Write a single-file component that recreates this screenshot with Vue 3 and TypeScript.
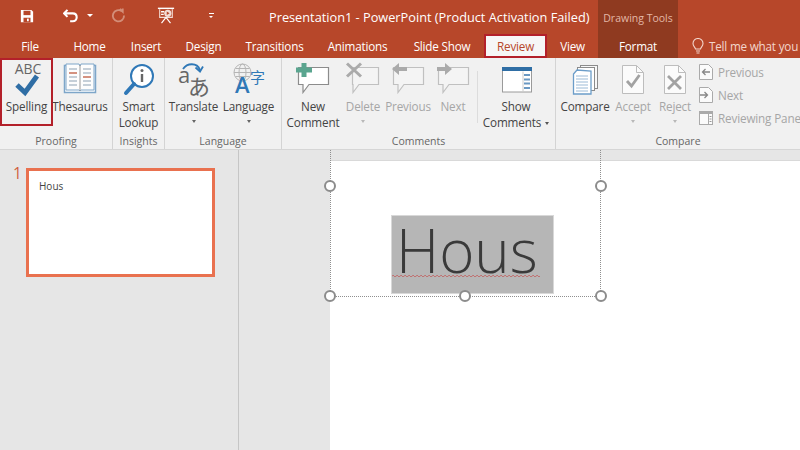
<script setup lang="ts">
interface Tab { label: string; width: number; kind?: string }
const tabs: Tab[] = [
  { label: 'File', width: 60 },
  { label: 'Home', width: 59 },
  { label: 'Insert', width: 54 },
  { label: 'Design', width: 61 },
  { label: 'Transitions', width: 81 },
  { label: 'Animations', width: 85 },
  { label: 'Slide Show', width: 84 },
  { label: 'Review', width: 63, kind: 'active' },
  { label: 'View', width: 51 },
  { label: 'Format', width: 80, kind: 'context' },
]
</script>

<template>
  <div class="app">
    <header class="titlebar">
      <div class="qat">
        <svg class="q-save" width="14" height="14" viewBox="0 0 16 16"><path d="M1 1h12l2 2v12H1z" fill="#fff"/><rect x="4" y="2" width="8" height="5" fill="#b7472a"/><rect x="4" y="10" width="8" height="5" fill="#b7472a"/><rect x="8" y="11" width="2" height="3" fill="#fff"/></svg>
        <svg class="q-undo" width="16" height="14" viewBox="0 0 18 16"><path d="M5 1L1 5l4 4M1 5h10c6 0 6 9 0 9H8" fill="none" stroke="#fff" stroke-width="2.4"/></svg>
        <span class="q-caret"></span>
        <svg class="q-redo" width="15" height="15" viewBox="0 0 15 16"><path d="M11 3.500A6 6 0 1 0 13.400 8M9 1l3 3v-3.500" fill="none" stroke="#d38e79" stroke-width="2"/></svg>
        <svg class="q-show" width="18" height="18" viewBox="0 0 20 20"><path d="M1 1.500h18" stroke="#fff" stroke-width="1.600"/><path d="M3 2.500v9h14v-9" fill="none" stroke="#f3dcd5" stroke-width="1.200"/><path d="M10 11.500L5 18M10 11.500l5 6.500" stroke="#fff" stroke-width="1.300"/><circle cx="12" cy="7" r="4" fill="#f3dcd5"/><path d="M10.800 5l3.200 2-3.200 2z" fill="#b7472a"/><path d="M4.500 4.500h3.500v1.500h-3.500zM4.500 7.500h3v1.500h-3z" fill="#fff"/></svg>
        <span class="q-more"></span>
      </div>
      <div class="doc-title">Presentation1 - PowerPoint (Product Activation Failed)</div>
      <div class="context-label">Drawing Tools</div>
    </header>

    <nav class="tabs">
      <div
        v-for="t in tabs"
        :key="t.label"
        class="tab"
        :class="t.kind"
        :style="{ width: t.width + 'px' }"
      >{{ t.label }}</div>
      <div class="tell">
        <svg width="12" height="16" viewBox="0 0 12 16"><path d="M3.500 11C3 9 1 8 1 5.500a5 5 0 0 1 10 0C11 8 9 9 8.500 11zM4 13h4M4.500 15h3" fill="none" stroke="#f3d6cc" stroke-width="1.100"/></svg>
        <span>Tell me what you want to do</span>
      </div>
    </nav>

    <section class="ribbon">
      <div class="group g-proofing">
        <div class="btns">
          <div class="btn spelling">
            <svg class="ico" width="40" height="38" viewBox="0 0 40 38"><text x="21" y="14" text-anchor="middle" class="abc">ABC</text><path d="M10 25l8 7.500L30 16" fill="none" stroke="#2f6ea5" stroke-width="5"/></svg>
            <span class="lbl">Spelling</span>
          </div>
          <div class="btn thesaurus">
            <svg class="ico" width="34" height="38" viewBox="0 1 34 38"><path d="M1.500 6.500h31v27h-31z" fill="#fff" stroke="#7ea6c9" stroke-width="1.500"/><path d="M3 5h13l1 2 1-2h13v26H18l-1 1-1-1H3z" fill="#fdfdfd" stroke="#7ea6c9"/><path d="M17 6v26" stroke="#9a9a9a"/><path d="M6 10h8M6 14h8M6 18h8M6 22h8M6 26h8M20 10h8M20 14h8M20 18h8M20 22h8M20 26h8" stroke="#b3c0cc" stroke-width="1.400"/><path d="M6 14h8M20 18h8" stroke="#d97f63" stroke-width="1.400"/></svg>
            <span class="lbl">Thesaurus</span>
          </div>
        </div>
        <div class="gname">Proofing</div>
      </div>

      <div class="group g-insights">
        <div class="btns">
          <div class="btn lookup">
            <svg class="ico" width="38" height="38" viewBox="0 -1 38 38"><circle cx="22" cy="15" r="11" fill="#fff" stroke="#2f78b7" stroke-width="2"/><path d="M14 23L6 32" stroke="#2f78b7" stroke-width="4" stroke-linecap="round"/><circle cx="22" cy="9.500" r="1.500" fill="#666"/><path d="M22 13v8" stroke="#666" stroke-width="2.400"/></svg>
            <span class="lbl">Smart<br />Lookup</span>
          </div>
        </div>
        <div class="gname">Insights</div>
      </div>

      <div class="group g-language">
        <div class="btns">
          <div class="btn translate">
            <svg class="ico" width="40" height="38" viewBox="0 -1 40 38"><path d="M9 8c4-6 14-7 17 1" fill="none" stroke="#2f78b7" stroke-width="1.800"/><path d="M21.500 6.500l4.500 4 3-5" fill="none" stroke="#2f78b7" stroke-width="1.800"/><text x="4" y="22" class="tr-a">a</text><text x="14" y="34" class="tr-j">あ</text></svg>
            <span class="lbl">Translate</span>
            <span class="caret"></span>
          </div>
          <div class="btn language">
            <svg class="ico" width="40" height="38" viewBox="0 -1 40 38"><circle cx="13.500" cy="11.500" r="8.500" fill="none" stroke="#b5b5b5"/><ellipse cx="13.500" cy="11.500" rx="3.500" ry="8.500" fill="none" stroke="#b5b5b5"/><path d="M5 11.500h17M6.500 7.500h14M6.500 15.500h14" stroke="#b5b5b5"/><text x="6" y="32" class="la-a">A</text><text x="21" y="22" class="la-j">字</text></svg>
            <span class="lbl">Language</span>
            <span class="caret"></span>
          </div>
        </div>
        <div class="gname">Language</div>
      </div>

      <div class="group g-comments">
        <div class="btns">
          <div class="btn newc">
            <svg class="ico" width="40" height="38" viewBox="0 -1 40 38"><path d="M5.500 6.500h30v17H16l-6 8v-8H5.500z" fill="#fff" stroke="#8c8c8c" stroke-width="1.200"/><path d="M8.500 2h5v4.500H19v5h-5.500V16h-5v-4.500H3v-5h5.500z" fill="#5aa58f"/></svg>
            <span class="lbl">New<br />Comment</span>
          </div>
          <div class="btn dis del">
            <svg class="ico" width="40" height="38" viewBox="0 -1 40 38"><path d="M9.500 6.500h26v17H16l-6 8v-8H9.500z" fill="#f4f4f4" stroke="#c0c0c0" stroke-width="1.200"/><path d="M4 2.500l14 13M18 2.500l-14 13" stroke="#aaa" stroke-width="3"/></svg>
            <span class="lbl">Delete</span>
            <span class="caret pale"></span>
          </div>
          <div class="btn dis prev">
            <svg class="ico" width="40" height="38" viewBox="0 -1 40 38"><path d="M5.500 6.500h30v17H16l-6 8v-8H5.500z" fill="#f4f4f4" stroke="#c0c0c0" stroke-width="1.200"/><path d="M4 8l7-6v4h8v4h-8v4z" fill="#aaa"/></svg>
            <span class="lbl">Previous</span>
          </div>
          <div class="btn dis next">
            <svg class="ico" width="40" height="38" viewBox="0 -1 40 38"><path d="M5.500 6.500h30v17H16l-6 8v-8H5.500z" fill="#f4f4f4" stroke="#c0c0c0" stroke-width="1.200"/><path d="M19 8l-7-6v4H4v4h8v4z" fill="#aaa"/></svg>
            <span class="lbl">Next</span>
          </div>
          <div class="sep"></div>
          <div class="btn showc">
            <svg class="ico" width="34" height="38" viewBox="0 -1 34 38"><rect x="3.500" y="6.500" width="29" height="24.500" fill="#fff" stroke="#9a9a9a"/><rect x="3" y="6" width="30" height="4" fill="#2f6ea5"/><path d="M24 10.500V31" stroke="#ccc"/><path d="M25 14h6M25 18.500h6M25 22.500h6M25 27h6" stroke="#6a98c2" stroke-width="2"/></svg>
            <span class="lbl">Show<br />Comments<i class="inline-caret"></i></span>
          </div>
        </div>
        <div class="gname">Comments</div>
      </div>

      <div class="group g-compare">
        <div class="btns">
          <div class="btn compare">
            <svg class="ico" width="34" height="38" viewBox="0 -1 34 38"><rect x="12.500" y="4.500" width="17" height="23" fill="#f8f8f8" stroke="#8c8c8c"/><rect x="9.500" y="6.500" width="17" height="23" fill="#fff" stroke="#8c8c8c"/><path d="M9 9L5.500 13v20H23V10z" fill="#fff" stroke="#6b9dc9" stroke-width="1.300"/><path d="M8 15h12M8 18h12M8 21h12M8 24h12M8 27h12M8 30h12" stroke="#9bbad6"/></svg>
            <span class="lbl">Compare</span>
          </div>
          <div class="btn dis accept">
            <svg class="ico" width="34" height="38" viewBox="0 -1 34 38"><path d="M6.500 4.500h14l7 7v21h-21z" fill="#fbfbfb" stroke="#bdbdbd"/><path d="M20.500 4.500v7h7" fill="none" stroke="#bdbdbd"/><path d="M11 20l4.500 5 8-11" fill="none" stroke="#a2a2a2" stroke-width="2.800"/></svg>
            <span class="lbl">Accept</span>
            <span class="caret pale"></span>
          </div>
          <div class="btn dis reject">
            <svg class="ico" width="34" height="38" viewBox="0 -1 34 38"><path d="M6.500 4.500h14l7 7v21h-21z" fill="#fbfbfb" stroke="#bdbdbd"/><path d="M20.500 4.500v7h7" fill="none" stroke="#bdbdbd"/><path d="M10 15l13 13M23 15L10 28" stroke="#a2a2a2" stroke-width="2.800"/></svg>
            <span class="lbl">Reject</span>
            <span class="caret pale"></span>
          </div>
          <div class="small-list">
            <div class="small">
              <svg width="14" height="16" viewBox="0 0 14 16"><path d="M.500.500h9l4 4v11H.500z" fill="#fbfbfb" stroke="#aaa"/><path d="M11 8H4M6.500 5L3.500 8l3 3" fill="none" stroke="#888" stroke-width="1.300"/></svg>
              <span>Previous</span>
            </div>
            <div class="small">
              <svg width="14" height="16" viewBox="0 0 14 16"><path d="M.500.500h9l4 4v11H.500z" fill="#fbfbfb" stroke="#aaa"/><path d="M1 8h7M5.500 5l3 3-3 3" fill="none" stroke="#888" stroke-width="1.300"/></svg>
              <span>Next</span>
            </div>
            <div class="small">
              <svg width="14" height="14" viewBox="0 0 14 14"><rect x=".5" y=".5" width="13" height="13" fill="#fbfbfb" stroke="#aaa"/><rect x="1" y="1" width="12" height="2" fill="#aaa"/><path d="M9.500 3v10" stroke="#aaa"/><path d="M10.500 5.500h2M10.500 8h2M10.500 10.500h2" stroke="#999"/></svg>
              <span>Reviewing Pane</span>
            </div>
          </div>
        </div>
        <div class="gname">Compare</div>
      </div>
    </section>

    <main class="workspace">
      <aside class="thumbs">
        <span class="num">1</span>
        <div class="thumb"><span>Hous</span></div>
      </aside>
      <div class="canvas">
        <div class="slide">
          <div class="selection">
            <div class="hl">
              <span class="big">Hous</span>
              <svg class="wave" width="148" height="4" viewBox="0 0 148 4"><defs><pattern id="w" width="4" height="4" patternUnits="userSpaceOnUse"><path d="M0 2.500L1 1l2 2 1-1" fill="none" stroke="#c06a6a" stroke-width=".9"/></pattern></defs><rect width="148" height="4" fill="url(#w)"/></svg>
            </div>
            <i class="h tl"></i><i class="h tr"></i><i class="h bl"></i><i class="h bm"></i><i class="h br"></i>
          </div>
        </div>
      </div>
    </main>
  </div>
</template>

<style scoped>
.app { width: 800px; height: 450px; overflow: hidden; display: flex; flex-direction: column; font-family: "Open Sans", "Liberation Sans", sans-serif; background: #e6e6e6; color: #444; }
.titlebar { height: 34px; flex: none; display: flex; align-items: center; background: #b7472a; color: #fff; font-size: 12px; }
.qat { width: 269px; height: 100%; flex: none; display: flex; align-items: center; padding: 0 0 3px 20px; box-sizing: border-box; }
.q-undo { margin-left: 29px; }
.q-caret { margin-left: 8px; border: 3px solid transparent; border-top-color: #fff; border-bottom: 0; }
.q-redo { margin-left: 18px; }
.q-show { margin-left: 31px; }
.q-more { margin-left: 34px; width: 5px; height: 4px; border-top: 1px solid #fff; position: relative; }
.q-more::after { content: ""; position: absolute; left: 0; top: 2px; border: 2.500px solid transparent; border-top-color: #fff; border-bottom: 0; }
.doc-title { width: 329px; flex: none; white-space: nowrap; font-size: 12.750px; }
.context-label { width: 80px; height: 100%; flex: none; display: flex; align-items: center; justify-content: center; background: #8f3a20; color: #e3b7a7; font-size: 10.500px; white-space: nowrap; padding-top: 2px; box-sizing: border-box; }
.tabs { height: 24px; flex: none; display: flex; background: #b7472a; color: #fff; font-size: 11.700px; letter-spacing: -0.2px; }
.tab { flex: none; box-sizing: border-box; display: flex; align-items: center; justify-content: center; white-space: nowrap; }
.tab.active { background: #f6f6f6; color: #b7472a; border: 2px solid #b3202a; }
.tab.context { background: #8f3a20; }
.tell { margin-left: 14px; display: flex; align-items: center; gap: 5px; color: #f3d6cc; white-space: nowrap; }
.ribbon { height: 92px; flex: none; display: flex; background: #f1f1f1; border-bottom: 1px solid #d6d6d6; box-sizing: border-box; font-size: 11.700px; letter-spacing: -0.15px; color: #444; }
.group { flex: none; box-sizing: border-box; display: flex; flex-direction: column; border-right: 1px solid #d4d4d4; }
.g-proofing { width: 113px; }
.g-insights { width: 52px; }
.g-language { width: 117px; }
.g-comments { width: 274px; }
.g-compare { width: 244px; border-right: 0; }
.btns { flex: 1; display: flex; min-height: 0; }
.gname { height: 17px; flex: none; text-align: center; font-size: 10.500px; line-height: 18px; letter-spacing: 0; color: #666; }
.btn { flex: none; box-sizing: border-box; display: flex; flex-direction: column; align-items: center; padding-top: 2px; text-align: center; }
.ico { display: block; height: 38px; flex: none; overflow: visible; }
.lbl { line-height: 16px; white-space: nowrap; }
.dis { color: #a6a6a6; }
.spelling { width: 53px; height: 68px; border: 2px solid #b3202a; padding-top: 0; }
.thesaurus { width: 54px; }
.lookup { width: 51px; }
.translate { width: 55px; margin-left: 1px; }
.language { width: 55px; }
.newc { width: 58px; margin-left: 2px; }
.del { width: 42px; }
.prev { width: 48px; }
.next { width: 42px; }
.sep { width: 1px; height: 52px; margin: 13px 0 0 3px; background: #dcdcdc; flex: none; }
.showc { width: 76px; }
.compare { width: 56px; margin-left: 1px; }
.accept { width: 40px; }
.reject { width: 44px; }
.caret { width: 0; height: 0; margin-top: 6px; border: 2.500px solid transparent; border-top: 3px solid #666; border-bottom: 0; }
.caret.pale { border-top-color: #b8b8b8; }
.inline-caret { display: inline-block; margin-left: 4px; vertical-align: 2px; border: 2.500px solid transparent; border-top: 3px solid #555; border-bottom: 0; }
.small-list { margin-left: 2px; padding-top: 6px; display: flex; flex-direction: column; gap: 7px; color: #a6a6a6; white-space: nowrap; }
.small { height: 16px; display: flex; align-items: center; gap: 5px; }
.workspace { flex: 1; display: flex; min-height: 0; }
.thumbs { width: 239px; flex: none; box-sizing: border-box; border-right: 1px solid #c6c6c6; position: relative; padding: 18px 0 0 26px; background: #e6e6e6; }
.num { position: absolute; left: 13px; top: 13px; color: #d0603f; font-size: 15.500px; line-height: 20px; }
.thumb { width: 189px; height: 109px; box-sizing: border-box; border: 3px solid #e9714f; background: #fff; padding: 8px 0 0 10px; font-size: 10px; line-height: 14px; color: #444; }
.canvas { flex: 1; padding: 11px 0 0 91px; min-width: 0; }
.slide { height: 100%; background: #fff; position: relative; box-shadow: 0 -1px 0 #d9d9d9; }
.selection { position: absolute; left: 0; top: -11px; width: 271px; height: 147px; box-sizing: border-box; border: 1px dotted #8f8f8f; border-top: 0; }
.hl { position: absolute; left: 61px; top: 66px; width: 161px; height: 77px; background: #b6b6b6; box-shadow: 0 0 0 1px #d8d8d8; }
.big { position: absolute; left: 4px; top: -3px; font-family: "Open Sans", sans-serif; font-weight: 350; font-size: 60px; line-height: 74px; color: #3a3a3a; white-space: nowrap; }
.wave { position: absolute; left: 0; top: 58px; }
.h { position: absolute; width: 12px; height: 12px; box-sizing: border-box; border: 2px solid #8c8c8c; border-radius: 50%; background: #fff; }
.tl { left: -7px; top: 30px; }
.tr { right: -7px; top: 30px; }
.bl { left: -7px; bottom: -6px; }
.bm { left: 128px; bottom: -6px; }
.br { right: -7px; bottom: -6px; }
.abc { font-size: 14px; fill: #666; font-family: "Open Sans", sans-serif; }
.tr-a { font-size: 22px; fill: #666; font-family: "Open Sans", sans-serif; }
.tr-j { font-size: 22px; fill: #666; font-family: "Noto Sans CJK JP", sans-serif; }
.la-a { font-size: 22px; fill: #2f78b7; font-weight: 600; font-family: "Open Sans", sans-serif; }
.la-j { font-size: 15px; fill: #2f78b7; font-family: "Noto Sans CJK SC", sans-serif; }
</style>

<style>
html, body { margin: 0; padding: 0; }
</style>
